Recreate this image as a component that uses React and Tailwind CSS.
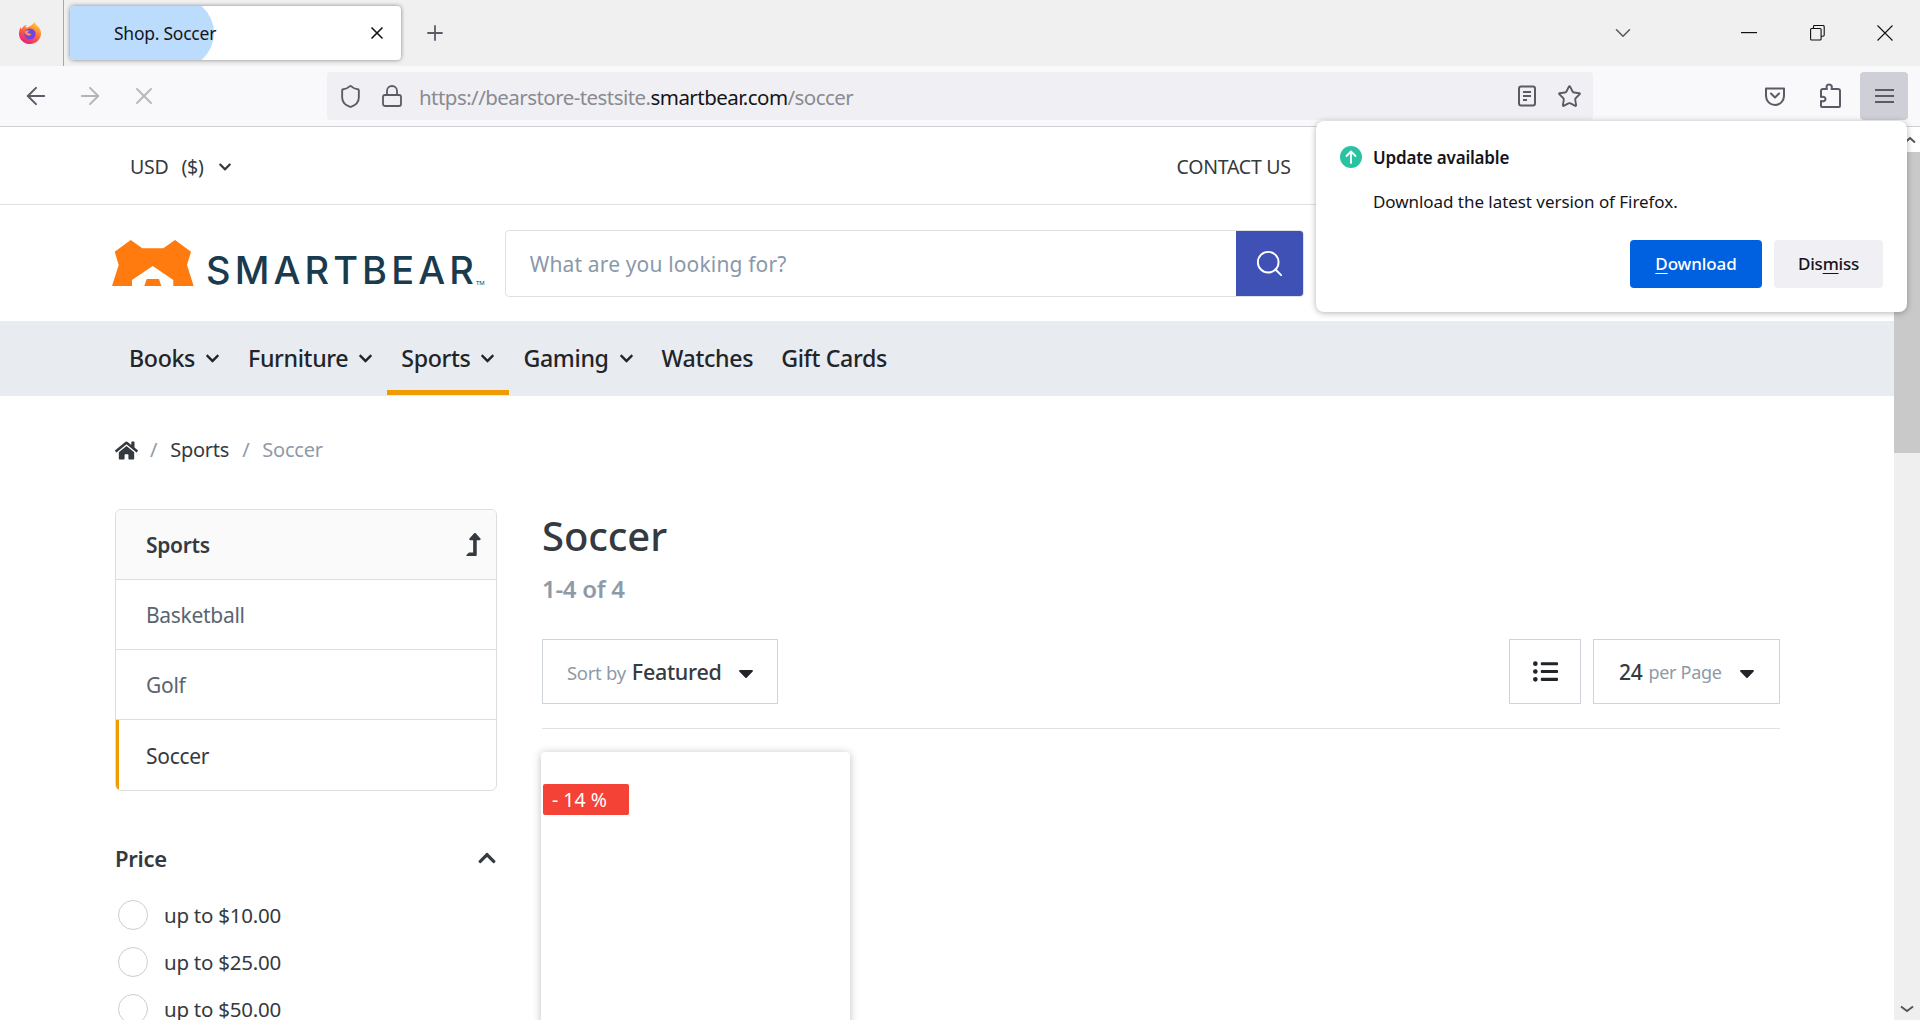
import { ArrowLeft, ArrowRight, X, Plus, ChevronDown, Shield, Lock, Star, Search } from 'lucide-react'
import { FaHome, FaChevronDown, FaChevronUp, FaListUl, FaCaretDown, FaLevelUpAlt } from 'react-icons/fa'

const navItems = [
  { label: 'Books', arrow: true },
  { label: 'Furniture', arrow: true },
  { label: 'Sports', arrow: true, active: true },
  { label: 'Gaming', arrow: true },
  { label: 'Watches' },
  { label: 'Gift Cards' },
]

const prices = ['up to $10.00', 'up to $25.00', 'up to $50.00']

function FirefoxLogo() {
  return (
    <svg width="24" height="24" viewBox="0 0 24 24">
      <defs>
        <linearGradient id="ffA" x1="0.8" y1="0" x2="0.2" y2="1">
          <stop offset="0" stopColor="#ffd43a" />
          <stop offset="0.45" stopColor="#ff7139" />
          <stop offset="1" stopColor="#e31587" />
        </linearGradient>
      </defs>
      <path d="M16.5 1c.6 2 2 3 3.6 4.6C22 7.6 23 10 23 12.600c0 5.800-4.800 10.400-11 10.400S1 18.300 1 12.400C1 10 1.700 7.800 2.800 6.200c.2 1 .5 1.600 1 2C4.600 5.800 6.500 4 9 4c-1 .8-1.500 1.600-1.700 2.500 2 .2 3.600-.5 5-1.500 1.700-1.200 3.200-2.300 4.200-4z" fill="url(#ffA)" />
      <circle cx="12" cy="13" r="5.600" fill="#7542e5" />
      <path d="M6.500 11c1.500-1.600 3.500-1.800 5.500-1.300-1.200.2-2.200.8-2.400 2 1.500.8 3 .6 3.800 1.800-1.800 2-5.400 1.600-6.900-2.500z" fill="#ff9640" />
    </svg>
  )
}

function ReaderIcon() {
  return (
    <svg width="20" height="22" viewBox="0 0 20 22" fill="none" stroke="#5b5b66" strokeWidth="2">
      <rect x="2" y="1.500" width="16" height="19" rx="2" />
      <path d="M6 7h8M6 11h8M6 15h4" />
    </svg>
  )
}

function PocketIcon() {
  return (
    <svg width="22" height="22" viewBox="0 0 22 22" fill="none" stroke="#5b5b66" strokeWidth="2" strokeLinecap="round" strokeLinejoin="round">
      <path d="M2 3.500h18v7.500a9 9 0 0 1-18 0z" />
      <path d="M7 8.500l4 4 4-4" />
    </svg>
  )
}

function PuzzleIcon() {
  return (
    <svg width="24" height="26" viewBox="0 0 24 26" fill="none" stroke="#5b5b66" strokeWidth="2" strokeLinejoin="round">
      <path d="M11 1.500c2.500 0 3.500 2 2.500 4.500H20c1 0 2 1 2 2v15c0 .6-.5 1-1 1H4c-.6 0-1-.4-1-1v-5c3 1 4.500-.5 4.500-2S6 13 3 14v-6c0-1 1-2 2-2h4C8 3.500 8.500 1.500 11 1.500z" />
    </svg>
  )
}

function BearLogo() {
  return (
    <svg width="82" height="46" viewBox="0 0 82 46" fill="#ff7a0f">
      <path d="M18.700 0L30.300 8.300H51.300L63 0L79 11.700L75 25L81.700 46H61.300V40L40.700 26L20 40V46H0L6.700 25L2.700 11.700Z" />
      <path d="M34.700 39H47L49.300 46H32.300Z" />
    </svg>
  )
}

function BrowserChrome() {
  return (
    <div className="shrink-0 font-['Noto_Sans',sans-serif]">
      {/* Tab strip */}
      <div className="h-[66px] bg-[#f0f0f0] flex items-center">
        <div className="w-[64px] h-full flex items-center justify-center border-r border-[#a8a8a8] pr-[4px]">
          <FirefoxLogo />
        </div>
        <div className="ml-[6px] w-[331px] h-[54px] rounded-[4px] bg-white shadow-[0_0_4px_rgba(0,0,0,0.45)] relative overflow-hidden flex items-center">
          <div className="absolute left-0 top-[-10px] bottom-[-10px] w-[144px] bg-[#bbdcfc] rounded-r-[40px_50%]" />
          <span className="relative ml-[44px] text-[17.500px] tracking-[-0.25px] text-[#15141a]">Shop. Soccer</span>
          <X className="absolute right-[14px] top-[17px] text-[#15141a]" size={20} strokeWidth={2} />
        </div>
        <Plus className="ml-[22px] text-[#5b5b66]" size={24} strokeWidth={1.800} />
        <div className="flex-1" />
        <ChevronDown className="mr-[105px] text-[#5b5b66]" size={26} strokeWidth={1.500} />
        <svg className="mr-[53px]" width="16" height="2"><rect width="16" height="1.200" fill="#111" /></svg>
        <svg className="mr-[52px]" width="15" height="16" viewBox="0 0 15 16" fill="none" stroke="#111" strokeWidth="1.100">
          <rect x="0.600" y="3.500" width="10.500" height="11.500" rx="1" />
          <path d="M3.500 3.500V1.500c0-.5.400-1 1-1h8.500c.7 0 1.200.5 1.200 1.200V10c0 .7-.5 1.200-1.200 1.200h-2" />
        </svg>
        <svg className="mr-[27px]" width="16" height="16" viewBox="0 0 16 16" stroke="#111" strokeWidth="1.100"><path d="M0.500 0.500l15 15M15.500 0.500l-15 15" /></svg>
      </div>

      {/* Nav bar */}
      <div className="h-[61px] bg-[#f9f9fb] border-b border-[#cfcfd4] flex items-center">
        <ArrowLeft className="ml-[22px] text-[#5b5b66]" size={28} strokeWidth={1.700} />
        <ArrowRight className="ml-[26px] text-[#b4b4b8]" size={28} strokeWidth={1.700} />
        <X className="ml-[26px] text-[#b9b9bd]" size={28} strokeWidth={1.700} />
        <div className="ml-[169px] w-[1266px] h-[48px] bg-[#f0f0f4] rounded-[4px] flex items-center">
          <Shield className="ml-[11px] text-[#5b5b66]" size={25} strokeWidth={1.800} />
          <Lock className="ml-[17px] text-[#5b5b66]" size={24} strokeWidth={1.800} />
          <div className="ml-[15px] pt-[2px] text-[20.500px] tracking-[-0.55px] text-[#8a8a91] whitespace-nowrap">
            https://bearstore-testsite.<span className="text-[#15141a]">smartbear.com</span>/soccer
          </div>
          <div className="flex-1" />
          <ReaderIcon />
          <Star className="ml-[20px] mr-[11px] text-[#5b5b66]" size={25} strokeWidth={1.800} />
        </div>
        <div className="ml-[171px]"><PocketIcon /></div>
        <div className="ml-[32px]"><PuzzleIcon /></div>
        <div className="ml-[18px] w-[48px] h-[48px] bg-[#cfcfd8] rounded-[4px] flex flex-col items-center justify-center gap-[4px]">
          <div className="w-[19px] h-[2px] bg-[#5b5b66]" />
          <div className="w-[19px] h-[2px] bg-[#5b5b66]" />
          <div className="w-[19px] h-[2px] bg-[#5b5b66]" />
        </div>
      </div>
    </div>
  )
}

function UpdatePopup() {
  return (
    <div className="absolute left-[1316px] top-[121px] w-[591px] h-[191px] bg-white rounded-[8px] shadow-[0_1px_6px_rgba(0,0,0,0.3)] pl-[24px] pr-[24px] pt-[25px] font-['Noto_Sans',sans-serif] text-[#15141a] z-10">
      <div className="flex items-center h-[22px]">
        <div className="w-[22px] h-[22px] rounded-full bg-[#2ac3a2] flex items-center justify-center">
          <svg width="12" height="14" viewBox="0 0 12 14" fill="none" stroke="#fff" strokeWidth="1.800" strokeLinecap="round" strokeLinejoin="round"><path d="M6 13V1.500M1.500 6L6 1.500 10.500 6" /></svg>
        </div>
        <span className="ml-[11px] pt-[1px] text-[17px] font-semibold tracking-[-0.2px]">Update available</span>
      </div>
      <div className="ml-[33px] mt-[23px] text-[17px] tracking-[-0.05px] leading-[22px]">Download the latest version of Firefox.</div>
      <div className="flex justify-end gap-[12px] mt-[27px]">
        <div className="w-[132px] h-[48px] rounded-[4px] bg-[#0061e0] text-white text-[17px] font-medium tracking-[-0.1px] flex items-center justify-center">
          <span><span className="underline underline-offset-[3px]">D</span>ownload</span>
        </div>
        <div className="w-[109px] h-[48px] rounded-[4px] bg-[#f0f0f4] text-[17px] font-medium tracking-[-0.2px] flex items-center justify-center">
          <span>Dis<span className="underline underline-offset-[3px]">m</span>iss</span>
        </div>
      </div>
    </div>
  )
}

function Scrollbar() {
  return (
    <div className="w-[26px] shrink-0 bg-[#efefef] flex flex-col">
      <div className="h-[25px] bg-white flex items-center justify-end pr-[4px]">
        <svg width="12" height="8" viewBox="0 0 12 8" fill="none" stroke="#555" strokeWidth="2"><path d="M1 6.500L6 2l5 4.500" /></svg>
      </div>
      <div className="h-[301px] bg-[#c9c9c9]" />
      <div className="flex-1" />
      <div className="h-[22px] flex items-center justify-center">
        <svg width="14" height="8" viewBox="0 0 14 8" fill="none" stroke="#555" strokeWidth="2"><path d="M1 1.500L7 6l6-4.500" /></svg>
      </div>
    </div>
  )
}

function SiteHeader() {
  return (
    <>
      <div className="h-[78px] border-b border-[#dee2e6] flex items-center pl-[130px] pt-[3px] text-[#343a40] text-[19.500px] tracking-[-0.25px]">
        <span>USD</span>
        <span className="ml-[13px]">($)</span>
        <FaChevronDown className="ml-[14px]" size={14} />
        <span className="ml-[945px]">CONTACT US</span>
      </div>
      <div className="h-[116px] flex items-center">
        <div className="ml-[112px] flex items-end">
          <BearLogo />
          <span className="ml-[12px] text-[38px] leading-[38px] font-['Inter',sans-serif] font-medium text-[#1a3a4e] tracking-[4.100px] -mb-[3px]">SMARTBEAR</span>
          <span className="text-[6px] leading-[6px] text-[#1a3a4e] -ml-[2px]">TM</span>
        </div>
        <div className="ml-[20px] w-[799px] h-[67px] border border-[#dee2e6] rounded-[4px] flex items-center overflow-hidden">
          <span className="ml-[24px] pt-[3px] text-[21px] tracking-[0.15px] text-[#8a99a8]">What are you looking for?</span>
          <div className="flex-1" />
          <div className="w-[67px] h-full bg-[#3f51b5] flex items-center justify-center">
            <Search className="text-white" size={31} strokeWidth={1.500} />
          </div>
        </div>
      </div>
      <div className="h-[75px] bg-[#e8ebf0] flex pl-[115px]">
        {navItems.map((item) => (
          <div
            key={item.label}
            className={`h-[74px] px-[14px] pt-[6px] flex items-center gap-[10px] border-b-[5px] text-[23.200px] tracking-[-0.35px] font-medium text-[#212529] ${item.active ? 'border-[#ee9c00]' : 'border-transparent'}`}
          >
            <span>{item.label}</span>
            {item.arrow && <FaChevronDown size={15} />}
          </div>
        ))}
      </div>
    </>
  )
}

function Sidebar() {
  return (
    <div className="w-[382px] shrink-0">
      <div className="border border-[#dedede] rounded-[6px] overflow-hidden">
        <div className="h-[70px] bg-[#fafafa] border-b border-[#dedede] flex items-center justify-between pl-[30px] pr-[11px] text-[21px] font-semibold tracking-[-0.3px] text-[#343a40]">
          <span className="pt-[2px]">Sports</span>
          <FaLevelUpAlt size={23} />
        </div>
        <div className="h-[70px] border-b border-[#dedede] flex items-center pl-[30px] pt-[3px] text-[21px] tracking-[-0.3px] text-[#5a6570]">Basketball</div>
        <div className="h-[70px] border-b border-[#dedede] flex items-center pl-[30px] pt-[3px] text-[21px] tracking-[-0.3px] text-[#5a6570]">Golf</div>
        <div className="h-[70px] border-l-[3px] border-[#ee9c00] flex items-center pl-[27px] pt-[3px] text-[21px] tracking-[-0.3px] text-[#343a40]">Soccer</div>
      </div>
      <div className="mt-[52px] flex items-center justify-between h-[30px] text-[#343a40]">
        <span className="text-[22px] font-semibold tracking-[-0.3px]">Price</span>
        <FaChevronUp size={20} />
      </div>
      <div className="mt-[27px] flex flex-col gap-[17px] pl-[3px]">
        {prices.map((price) => (
          <div key={price} className="flex items-center h-[30px]">
            <div className="w-[30px] h-[30px] rounded-full border border-[#cdcdcd] bg-white" />
            <span className="ml-[16px] text-[20.500px] tracking-[-0.25px] text-[#343a40]">{price}</span>
          </div>
        ))}
      </div>
    </div>
  )
}

function ProductArea() {
  return (
    <div className="ml-[45px] w-[1238px] shrink-0">
      <h1 className="mt-[2px] text-[40px] leading-[50px] font-medium tracking-[-0.1px] text-[#343a40]">Soccer</h1>
      <div className="mt-[14px] text-[24px] leading-[28px] font-semibold tracking-[-0.3px] text-[#8e9aa8]">1-4 of 4</div>
      <div className="mt-[36px] flex items-stretch h-[65px]">
        <div className="w-[236px] border border-[#ced4da] flex items-center pl-[24px] pt-[2px] whitespace-nowrap">
          <span className="text-[18.500px] tracking-[-0.3px] text-[#8e9aa8]">Sort by</span>
          <span className="ml-[6px] text-[21.500px] font-medium tracking-[-0.3px] text-[#343a40]">Featured</span>
          <FaCaretDown className="ml-[13px] text-[#212529]" size={24} />
        </div>
        <div className="flex-1" />
        <div className="w-[72px] border border-[#ced4da] flex items-center justify-center">
          <FaListUl className="text-[#212529]" size={25} />
        </div>
        <div className="ml-[12px] w-[187px] border border-[#ced4da] flex items-center pl-[25px] pt-[2px] whitespace-nowrap">
          <span className="text-[21px] font-medium tracking-[-0.3px] text-[#343a40]">24</span>
          <span className="ml-[6px] text-[18px] tracking-[-0.3px] text-[#8e9aa8]">per Page</span>
          <FaCaretDown className="ml-[13px] text-[#212529]" size={24} />
        </div>
      </div>
      <div className="mt-[24px] border-t border-[#dee2e6]" />
      <div className="mt-[23px] -ml-[1px] w-[309px] h-[400px] bg-white rounded-[4px] shadow-[0_1px_8px_rgba(0,0,0,0.25)] pt-[32px] pl-[2px]">
        <div className="w-[86px] h-[31px] bg-[#f44336] rounded-[2px] pl-[9px] text-white text-[19.500px] leading-[32px]">- 14 %</div>
      </div>
    </div>
  )
}

export default function App() {
  return (
    <div className="relative w-[1920px] h-[1020px] overflow-hidden bg-white flex flex-col">
      <BrowserChrome />
      <div className="flex-1 min-h-0 flex">
        <div className="flex-1 min-w-0 overflow-hidden font-['Noto_Sans',sans-serif]">
          <SiteHeader />
          <div className="mt-[42px] pl-[115px] flex items-center h-[24px] text-[20px] tracking-[-0.25px] text-[#343a40]">
            <FaHome size={23} />
            <span className="ml-[12px] text-[#8e9aa8]">/</span>
            <span className="ml-[13px]">Sports</span>
            <span className="ml-[13px] text-[#8e9aa8]">/</span>
            <span className="ml-[13px] text-[#8e9aa8]">Soccer</span>
          </div>
          <div className="mt-[47px] pl-[115px] flex">
            <Sidebar />
            <ProductArea />
          </div>
        </div>
        <Scrollbar />
      </div>
      <UpdatePopup />
    </div>
  )
}
